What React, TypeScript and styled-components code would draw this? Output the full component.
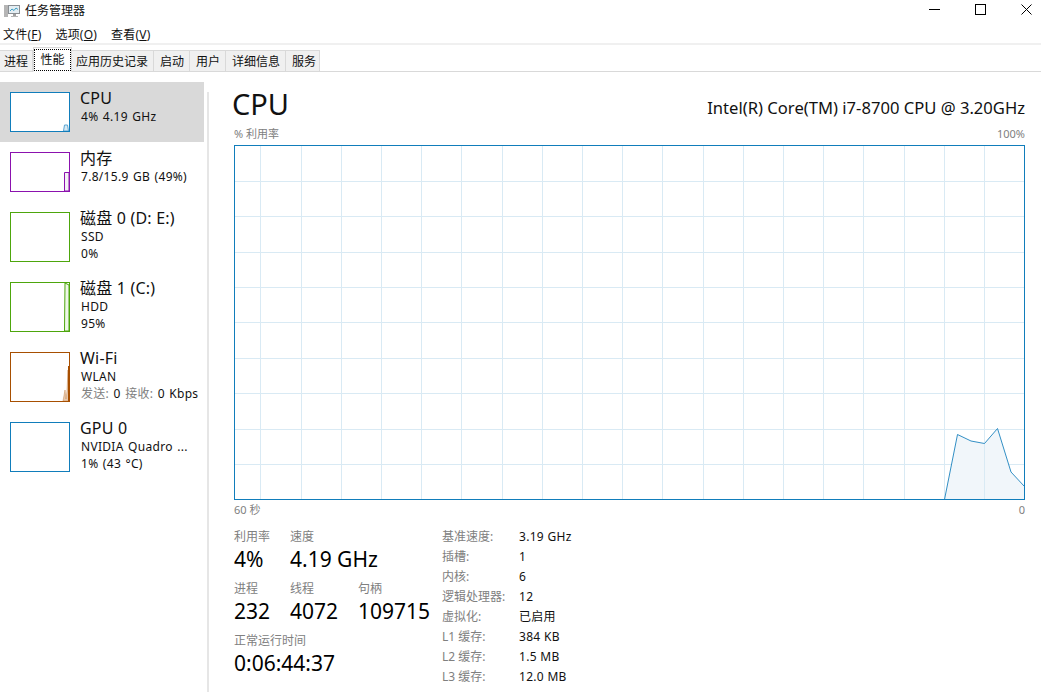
import React from 'react'
import styled, { createGlobalStyle } from 'styled-components'

const GlobalStyle = createGlobalStyle`
  html, body {
    margin: 0;
    padding: 0;
    background: #fff;
    overflow: hidden;
  }
  body {
    font-family: "Noto Sans", "Noto Sans CJK SC", sans-serif;
    color: #111;
  }
`

const Window = styled.div`
  width: 1041px;
  height: 692px;
  display: flex;
  flex-direction: column;
  overflow: hidden;
`

const TitleBar = styled.div`
  box-sizing: border-box;
  height: 25px;
  padding: 0 0 5px 4px;
  display: flex;
  align-items: center;
  gap: 5px;
  font-size: 12px;
`

const TitleText = styled.span`
  flex: 1;
`

const WindowControls = styled.div`
  display: flex;
  align-items: center;
  gap: 16px;
`

const WindowButton = styled.div`
  width: 30px;
  height: 20px;
  margin-top: -2px;
  display: flex;
  align-items: center;
  justify-content: center;
`

const MenuBar = styled.div`
  height: 18px;
  display: flex;
  align-items: center;
  padding-left: 3px;
  gap: 14px;
  font-size: 12px;
  letter-spacing: 0.2px;
  border-bottom: 2px solid #f0f0f0;
`

const MenuItem = styled.span`
  u { text-decoration: underline; text-underline-offset: 1px; }
`

const TabStrip = styled.div`
  height: 27px;
  box-sizing: border-box;
  display: flex;
  align-items: flex-end;
  border-bottom: 1px solid #d9d9d9;
`

const Tab = styled.div<{ $width: number; $pad: number }>`
  box-sizing: border-box;
  width: ${p => p.$width}px;
  height: 22px;
  margin-bottom: -1px;
  padding-left: ${p => p.$pad}px;
  display: flex;
  align-items: center;
  font-size: 12px;
  background: #f0f0f0;
  border: 1px solid #d9d9d9;
  border-left-width: 0;
`

const ActiveTab = styled.div<{ $width: number }>`
  box-sizing: border-box;
  width: ${p => p.$width}px;
  height: 25px;
  margin-bottom: -1px;
  display: flex;
  align-items: center;
  justify-content: center;
  font-size: 12px;
  background: #fff;
  border: 1px solid #d9d9d9;
  border-bottom-color: #fff;
`

const TabFocus = styled.span`
  padding: 1px 5px;
  line-height: 18px;
  outline: 1px dotted #000;
`

const Body = styled.div`
  flex: 1;
  display: flex;
  min-height: 0;
`

const Sidebar = styled.div`
  width: 204px;
  padding-top: 10px;
  flex-shrink: 0;
`

const Divider = styled.div`
  width: 2px;
  margin: 20px 0 0 3px;
  background: #e6e6e6;
  flex-shrink: 0;
`

const Item = styled.div<{ $selected?: boolean; $tall?: boolean }>`
  box-sizing: border-box;
  height: ${p => (p.$tall ? '70px' : '60px')};
  padding: 10px 0 0 10px;
  display: flex;
  gap: 10px;
  background: ${p => (p.$selected ? '#d9d9d9' : 'transparent')};
`

const Thumb = styled.div<{ $color: string; $tall?: boolean }>`
  box-sizing: border-box;
  width: 60px;
  height: ${p => (p.$tall ? '50px' : '40px')};
  border: 1px solid ${p => p.$color};
  background: #fff;
  flex-shrink: 0;
  overflow: hidden;
`

const ThumbGraph = styled.svg`
  display: block;
  width: 58px;
  height: 100%;
`

const ItemText = styled.div`
  margin-top: -4px;
  min-width: 0;
  white-space: nowrap;
`

const ItemName = styled.div`
  font-size: 16px;
  line-height: 20px;
  letter-spacing: 0.2px;
`

const ItemLine = styled.div`
  font-size: 12px;
  line-height: 17px;
  letter-spacing: 0.3px;
  word-spacing: 1px;
  padding-left: 1px;
`

const Muted = styled.span`
  color: #808080;
`

const Main = styled.div`
  flex: 1;
  min-width: 0;
  padding: 0 16px 0 23px;
`

const HeaderRow = styled.div`
  display: flex;
  justify-content: space-between;
  align-items: flex-end;
  height: 55px;
`

const BigTitle = styled.div`
  font-size: 29px;
  line-height: 40px;
  margin-bottom: 3px;
`

const CpuName = styled.div`
  font-size: 16.6px;
  line-height: 20px;
  margin-bottom: 9px;
`

const AxisRow = styled.div`
  display: flex;
  justify-content: space-between;
  font-size: 11px;
  line-height: 14px;
  color: #808080;
  padding-left: 2px;
`

const Graph = styled.svg`
  display: block;
  width: 791px;
  height: 356px;
  margin: 4px 0 2px 2px;
`

const Stats = styled.div`
  display: flex;
  padding: 12px 0 0 2px;
`

const StatsLeft = styled.div`
  width: 208px;
  display: flex;
  flex-direction: column;
`

const StatRow = styled.div`
  display: flex;
  margin-bottom: 8px;
`

const Stat = styled.div<{ $width?: number }>`
  width: ${p => (p.$width ? `${p.$width}px` : 'auto')};
  white-space: nowrap;
`

const StatLabel = styled.div`
  font-size: 12px;
  line-height: 16px;
  color: #808080;
`

const StatValue = styled.div`
  font-size: 21px;
  line-height: 28px;
  color: #000;
`

const Specs = styled.div`
  display: grid;
  grid-template-columns: 77px auto;
  grid-auto-rows: 20px;
  align-items: center;
  margin-top: -3px;
  font-size: 12px;
  height: 160px;
`

const SpecLabel = styled.div`
  color: #808080;
`

const SpecValue = styled.div`
  letter-spacing: 0.3px;
`

const tabs: { label: string; width: number; pad: number; active?: boolean }[] = [
  { label: '进程', width: 33, pad: 4 },
  { label: '性能', width: 39, pad: 0, active: true },
  { label: '应用历史记录', width: 82, pad: 4 },
  { label: '启动', width: 36, pad: 6 },
  { label: '用户', width: 36, pad: 6 },
  { label: '详细信息', width: 60, pad: 6 },
  { label: '服务', width: 34, pad: 6 },
]

const specs: [string, string][] = [
  ['基准速度:', '3.19 GHz'],
  ['插槽:', '1'],
  ['内核:', '6'],
  ['逻辑处理器:', '12'],
  ['虚拟化:', '已启用'],
  ['L1 缓存:', '384 KB'],
  ['L2 缓存:', '1.5 MB'],
  ['L3 缓存:', '12.0 MB'],
]

const vLines = Array.from({ length: 19 }, (_, i) => Math.round(750 - 40.2 * i) + 0.5)
const hLines = Array.from({ length: 9 }, (_, i) => Math.ceil(35.4 * (i + 1)) + 0.5)

const cpuPoints = '710.5,354.5 723.5,289.5 737,296 750.5,298.5 763.5,283.5 777,327 790,341'

const AppIcon = () => (
  <svg width="16" height="16" viewBox="0 0 16 16">
    <rect x="0" y="3" width="4" height="12" fill="#b5b5b5" />
    <rect x="4.5" y="3.5" width="11" height="8" fill="#e4eef3" stroke="#8a8f94" />
    <path d="M6 9 L8 7 L10 8.5 L12 6 L14 7.5" fill="none" stroke="#3f9fc4" strokeWidth="1" />
    <rect x="9" y="12" width="3" height="2" fill="#a0a0a0" />
    <rect x="7" y="14" width="7" height="1" fill="#b5b5b5" />
  </svg>
)

const App = () => (
  <Window>
    <GlobalStyle />
    <TitleBar>
      <AppIcon />
      <TitleText>任务管理器</TitleText>
      <WindowControls>
        <WindowButton>
          <svg width="11" height="11" viewBox="0 0 11 11"><path d="M0 5.5H11" stroke="#000" /></svg>
        </WindowButton>
        <WindowButton>
          <svg width="11" height="11" viewBox="0 0 11 11"><rect x="0.5" y="0.5" width="10" height="10" fill="none" stroke="#000" /></svg>
        </WindowButton>
        <WindowButton>
          <svg width="11" height="11" viewBox="0 0 11 11"><path d="M0.5 0.5L10.5 10.5M10.5 0.5L0.5 10.5" stroke="#000" /></svg>
        </WindowButton>
      </WindowControls>
    </TitleBar>
    <MenuBar>
      <MenuItem>文件(<u>F</u>)</MenuItem>
      <MenuItem>选项(<u>O</u>)</MenuItem>
      <MenuItem>查看(<u>V</u>)</MenuItem>
    </MenuBar>
    <TabStrip>
      {tabs.map(t =>
        t.active ? (
          <ActiveTab key={t.label} $width={t.width}>
            <TabFocus>{t.label}</TabFocus>
          </ActiveTab>
        ) : (
          <Tab key={t.label} $width={t.width} $pad={t.pad}>
            {t.label}
          </Tab>
        )
      )}
    </TabStrip>
    <Body>
      <Sidebar>
        <Item $selected>
          <Thumb $color="#117dbb">
            <ThumbGraph viewBox="0 0 58 38" preserveAspectRatio="none">
              <path d="M52.5 38 L53.5 32 L56.5 32 L57.5 38 Z" fill="#d9eaf4" stroke="#5aa5d2" strokeWidth="1" />
            </ThumbGraph>
          </Thumb>
          <ItemText>
            <ItemName>CPU</ItemName>
            <ItemLine>4% 4.19 GHz</ItemLine>
          </ItemText>
        </Item>
        <Item>
          <Thumb $color="#8b12ae">
            <ThumbGraph viewBox="0 0 58 38" preserveAspectRatio="none">
              <path d="M53.5 38 L53.5 19.5 L58 19.5 L58 38 Z" fill="#f4f2f4" stroke="#8b12ae" strokeWidth="1" />
            </ThumbGraph>
          </Thumb>
          <ItemText>
            <ItemName>内存</ItemName>
            <ItemLine>7.8/15.9 GB (49%)</ItemLine>
          </ItemText>
        </Item>
        <Item $tall>
          <Thumb $color="#4da60c" $tall />
          <ItemText>
            <ItemName>磁盘 0 (D: E:)</ItemName>
            <ItemLine>SSD</ItemLine>
            <ItemLine>0%</ItemLine>
          </ItemText>
        </Item>
        <Item $tall>
          <Thumb $color="#4da60c" $tall>
            <ThumbGraph viewBox="0 0 58 48" preserveAspectRatio="none">
              <path d="M53.5 48 L54 0 L58 2 L58 48 Z" fill="#eff7e9" stroke="#4da60c" strokeWidth="1" />
            </ThumbGraph>
          </Thumb>
          <ItemText>
            <ItemName>磁盘 1 (C:)</ItemName>
            <ItemLine>HDD</ItemLine>
            <ItemLine>95%</ItemLine>
          </ItemText>
        </Item>
        <Item $tall>
          <Thumb $color="#a74f01" $tall>
            <ThumbGraph viewBox="0 0 58 48" preserveAspectRatio="none">
              <path d="M52 48 L54 37 L55 46 L56 38 L57 17 L57.5 48 Z" fill="#e8c9ae" stroke="#c98a52" strokeWidth="0.5" />
              <path d="M57.5 13V48" stroke="#a74f01" strokeWidth="1" />
            </ThumbGraph>
          </Thumb>
          <ItemText>
            <ItemName>Wi-Fi</ItemName>
            <ItemLine>WLAN</ItemLine>
            <ItemLine><Muted>发送:</Muted> 0 <Muted>接收:</Muted> 0 Kbps</ItemLine>
          </ItemText>
        </Item>
        <Item $tall>
          <Thumb $color="#117dbb" $tall />
          <ItemText>
            <ItemName>GPU 0</ItemName>
            <ItemLine>NVIDIA Quadro ...</ItemLine>
            <ItemLine>1% (43 °C)</ItemLine>
          </ItemText>
        </Item>
      </Sidebar>
      <Divider />
      <Main>
        <HeaderRow>
          <BigTitle>CPU</BigTitle>
          <CpuName>Intel(R) Core(TM) i7-8700 CPU @ 3.20GHz</CpuName>
        </HeaderRow>
        <AxisRow>
          <span>% 利用率</span>
          <span>100%</span>
        </AxisRow>
        <Graph viewBox="0 0 791 356">
          {vLines.map(x => (
            <path key={x} d={`M${x} 0V355`} stroke="#d9eaf4" strokeWidth="1" />
          ))}
          {hLines.map(y => (
            <path key={y} d={`M0 ${y}H790`} stroke="#d9eaf4" strokeWidth="1" />
          ))}
          <polygon points={`${cpuPoints} 790,354.5`} fill="#f1f6fa" />
          <path d="M750.5 298V354" stroke="#d9eaf4" strokeWidth="1" />
          <polyline points={cpuPoints} fill="none" stroke="#117dbb" strokeWidth="1" opacity="0.85" />
          <rect x="0.5" y="0.5" width="790" height="354" fill="none" stroke="#117dbb" strokeWidth="1" />
        </Graph>
        <AxisRow>
          <span>60 秒</span>
          <span>0</span>
        </AxisRow>
        <Stats>
          <StatsLeft>
            <StatRow>
              <Stat $width={56}>
                <StatLabel>利用率</StatLabel>
                <StatValue>4%</StatValue>
              </Stat>
              <Stat>
                <StatLabel>速度</StatLabel>
                <StatValue>4.19 GHz</StatValue>
              </Stat>
            </StatRow>
            <StatRow>
              <Stat $width={56}>
                <StatLabel>进程</StatLabel>
                <StatValue>232</StatValue>
              </Stat>
              <Stat $width={68}>
                <StatLabel>线程</StatLabel>
                <StatValue>4072</StatValue>
              </Stat>
              <Stat>
                <StatLabel>句柄</StatLabel>
                <StatValue>109715</StatValue>
              </Stat>
            </StatRow>
            <StatRow>
              <Stat>
                <StatLabel>正常运行时间</StatLabel>
                <StatValue>0:06:44:37</StatValue>
              </Stat>
            </StatRow>
          </StatsLeft>
          <Specs>
            {specs.map(([k, v]) => (
              <React.Fragment key={k}>
                <SpecLabel>{k}</SpecLabel>
                <SpecValue>{v}</SpecValue>
              </React.Fragment>
            ))}
          </Specs>
        </Stats>
      </Main>
    </Body>
  </Window>
)

export default App
